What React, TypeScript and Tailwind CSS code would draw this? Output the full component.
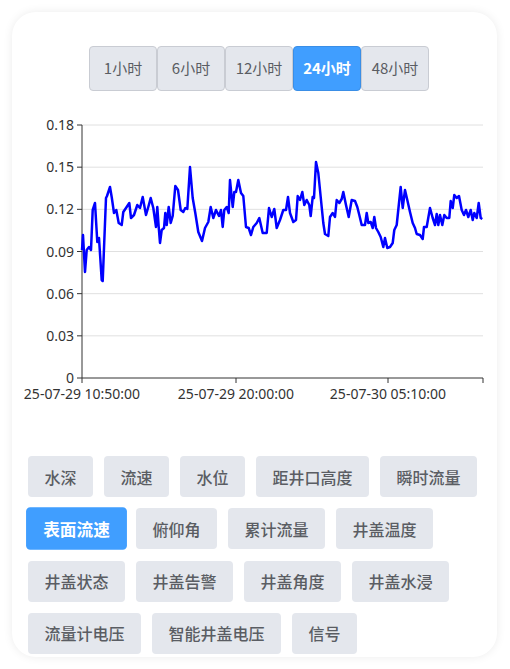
import React, { useState } from 'react';

const RANGES = ['1小时', '6小时', '12小时', '24小时', '48小时'];

const METRICS = [
    '水深', '流速', '水位', '距井口高度', '瞬时流量',
    '表面流速', '俯仰角', '累计流量', '井盖温度',
    '井盖状态', '井盖告警', '井盖角度', '井盖水浸',
    '流量计电压', '智能井盖电压', '信号',
];

// traced points, page coords [x, y]
const POINTS: [number, number][] = [
    [82, 250], [83, 235], [85, 272], [86.7, 250], [89, 247], [91, 250], [92.7, 210], [95, 203],
    [97.3, 242], [99, 238], [101.7, 280], [102.7, 281], [106, 198], [107, 196], [110, 187],
    [111.7, 197], [114, 213], [116.3, 210], [118.7, 223], [121.7, 225], [123.3, 212], [126, 208],
    [129.3, 203], [131, 218], [134, 215], [137.3, 205], [140, 208], [142.7, 197], [146, 215],
    [148.3, 207], [150.7, 198], [153.3, 208], [156, 227], [157.3, 207], [158.7, 227], [160, 243],
    [161.7, 230], [164, 228], [165.3, 213], [166.7, 225], [168.7, 207], [170.7, 223], [172.7, 216],
    [175.3, 186], [178, 190], [180.7, 210], [183.3, 212], [185.3, 208], [187.3, 209], [190, 167],
    [192.7, 198], [195.3, 213], [198.3, 232], [202, 241], [205, 228], [208.3, 222], [210.7, 207],
    [213.3, 218], [216, 210], [219, 216], [221, 210], [222.7, 227], [224.3, 210], [226.7, 207],
    [228.7, 213], [230, 180], [232.7, 207], [234.3, 192], [236, 192], [238.3, 180], [241, 193],
    [243.3, 196], [246, 227], [248.7, 228], [251, 235], [253.3, 227], [256.7, 223], [259.3, 218],
    [262.7, 233], [266.7, 233], [269, 208], [271.7, 217], [274.3, 209], [276.7, 228], [280, 220],
    [283.3, 210], [286, 210], [288, 197], [290, 213], [293.3, 222], [296, 220], [297.7, 196],
    [300, 200], [302.3, 192], [304.3, 205], [306.7, 200], [309.3, 205], [310.7, 216], [312.7, 197],
    [314, 198], [316, 162], [318.3, 173], [320.7, 197], [323.3, 223], [325, 234], [328.3, 236],
    [330, 217], [332.7, 213], [335, 217], [336.7, 200], [339.3, 203], [341.7, 199], [343.3, 192],
    [346, 205], [348.7, 217], [351.7, 200], [355, 201], [357.3, 207], [359.3, 215], [361.7, 225],
    [365, 225], [366.7, 213], [368.3, 223], [370.7, 222], [372.7, 228], [374.3, 217], [376, 228],
    [378.3, 232], [380.7, 237], [383.3, 247], [385, 238], [387.3, 248], [390, 247], [392.7, 243],
    [394.3, 230], [396.7, 225], [399, 203], [400.7, 187], [402.7, 208], [405, 190], [407.3, 200],
    [410, 212], [412.7, 223], [415, 228], [416.7, 234], [420, 235], [422.7, 239], [424, 227],
    [426.7, 227], [430, 208], [432.7, 218], [435, 225], [436.7, 214], [438.3, 225], [440, 215],
    [442.3, 225], [444.3, 215], [446.7, 218], [449.3, 218], [450.7, 201], [452.7, 208], [454.3, 195],
    [456.7, 198], [459, 196], [461.7, 210], [464, 215], [466, 210], [468.3, 217], [470.7, 210],
    [472.7, 220], [474.3, 213], [476.7, 218], [478.7, 203], [480.7, 218], [482.3, 219],
];

const Y_TICKS = ['0.18', '0.15', '0.12', '0.09', '0.06', '0.03', '0'];
const X_TICKS = [
    { x: 82, label: '25-07-29 10:50:00' },
    { x: 236, label: '25-07-29 20:00:00' },
    { x: 388, label: '25-07-30 05:10:00' },
];

const Chart: React.FC = () => {
    const top = 125;
    const bottom = 378;
    const step = (bottom - top) / 6;
    const line = POINTS.map(([x, y], i) => `${i === 0 ? 'M' : 'L'}${x} ${y}`).join(' ');

    return (
        <svg viewBox="12 105 485 310" width={485} height={310} className="block" style={{ fontFamily: '"Noto Sans", "Noto Sans CJK SC", sans-serif' }}>
            {Y_TICKS.map((label, i) => {
                const y = top + step * i;
                return (
                    <g key={label}>
                        {i < 6 && <line x1={82} x2={483} y1={y} y2={y} stroke="#e0e0e0" strokeWidth={1} />}
                        <line x1={77} x2={82} y1={y} y2={y} stroke="#333" strokeWidth={1} />
                        <text x={74} y={y + 5} textAnchor="end" fontSize={14} fill="#333">{label}</text>
                    </g>
                );
            })}
            <line x1={82} x2={82} y1={top} y2={bottom} stroke="#333" strokeWidth={1} />
            <line x1={82} x2={483} y1={bottom} y2={bottom} stroke="#333" strokeWidth={1} />
            {X_TICKS.map(t => (
                <g key={t.label}>
                    <line x1={t.x} x2={t.x} y1={bottom} y2={bottom + 5} stroke="#333" strokeWidth={1} />
                    <text x={t.x} y={bottom + 21} textAnchor="middle" fontSize={14} fill="#333">{t.label}</text>
                </g>
            ))}
            <line x1={483} x2={483} y1={bottom} y2={bottom + 5} stroke="#333" strokeWidth={1} />
            <path d={line} fill="none" stroke="#0000ff" strokeWidth={2.5} strokeLinejoin="round" />
        </svg>
    );
};

const App: React.FC = () => {
    const [range, setRange] = useState('24小时');
    const [metric, setMetric] = useState('表面流速');

    return (
        <div className="min-h-screen bg-white p-3" style={{ fontFamily: '"Noto Sans CJK SC", "Noto Sans", sans-serif' }}>
            <div className="w-[485px] h-[645px] rounded-[24px] bg-white shadow-[0_0_10px_rgba(0,0,0,0.08)] pt-[34px] px-4 overflow-hidden">
                <div className="flex pl-[61px]">
                    {RANGES.map(r => (
                        <button
                            key={r}
                            onClick={() => setRange(r)}
                            className={`w-[68px] h-[45px] text-[15px] rounded-[4px] border ${range === r ? 'bg-[#409eff] border-[#3a8ee6] text-white font-bold' : 'bg-[#e4e7ed] border-[#c9ccd3] text-[#5a5d63]'}`}
                        >
                            {r}
                        </button>
                    ))}
                </div>

                <div className="-mx-4 mt-[14px]">
                    <Chart />
                </div>

                <div className="flex flex-wrap gap-x-[11px] gap-y-[11.3px] mt-[41px]">
                    {METRICS.map(m => (
                        <button
                            key={m}
                            onClick={() => setMetric(m)}
                            className={`h-[41px] px-[16.5px] rounded-[4px] text-base ${metric === m ? 'bg-[#409eff] text-white font-bold scale-[1.04]' : 'bg-[#e4e7ed] text-[#5a5d63] font-medium'}`}
                        >
                            {m}
                        </button>
                    ))}
                </div>
            </div>
        </div>
    );
};

export default App;
